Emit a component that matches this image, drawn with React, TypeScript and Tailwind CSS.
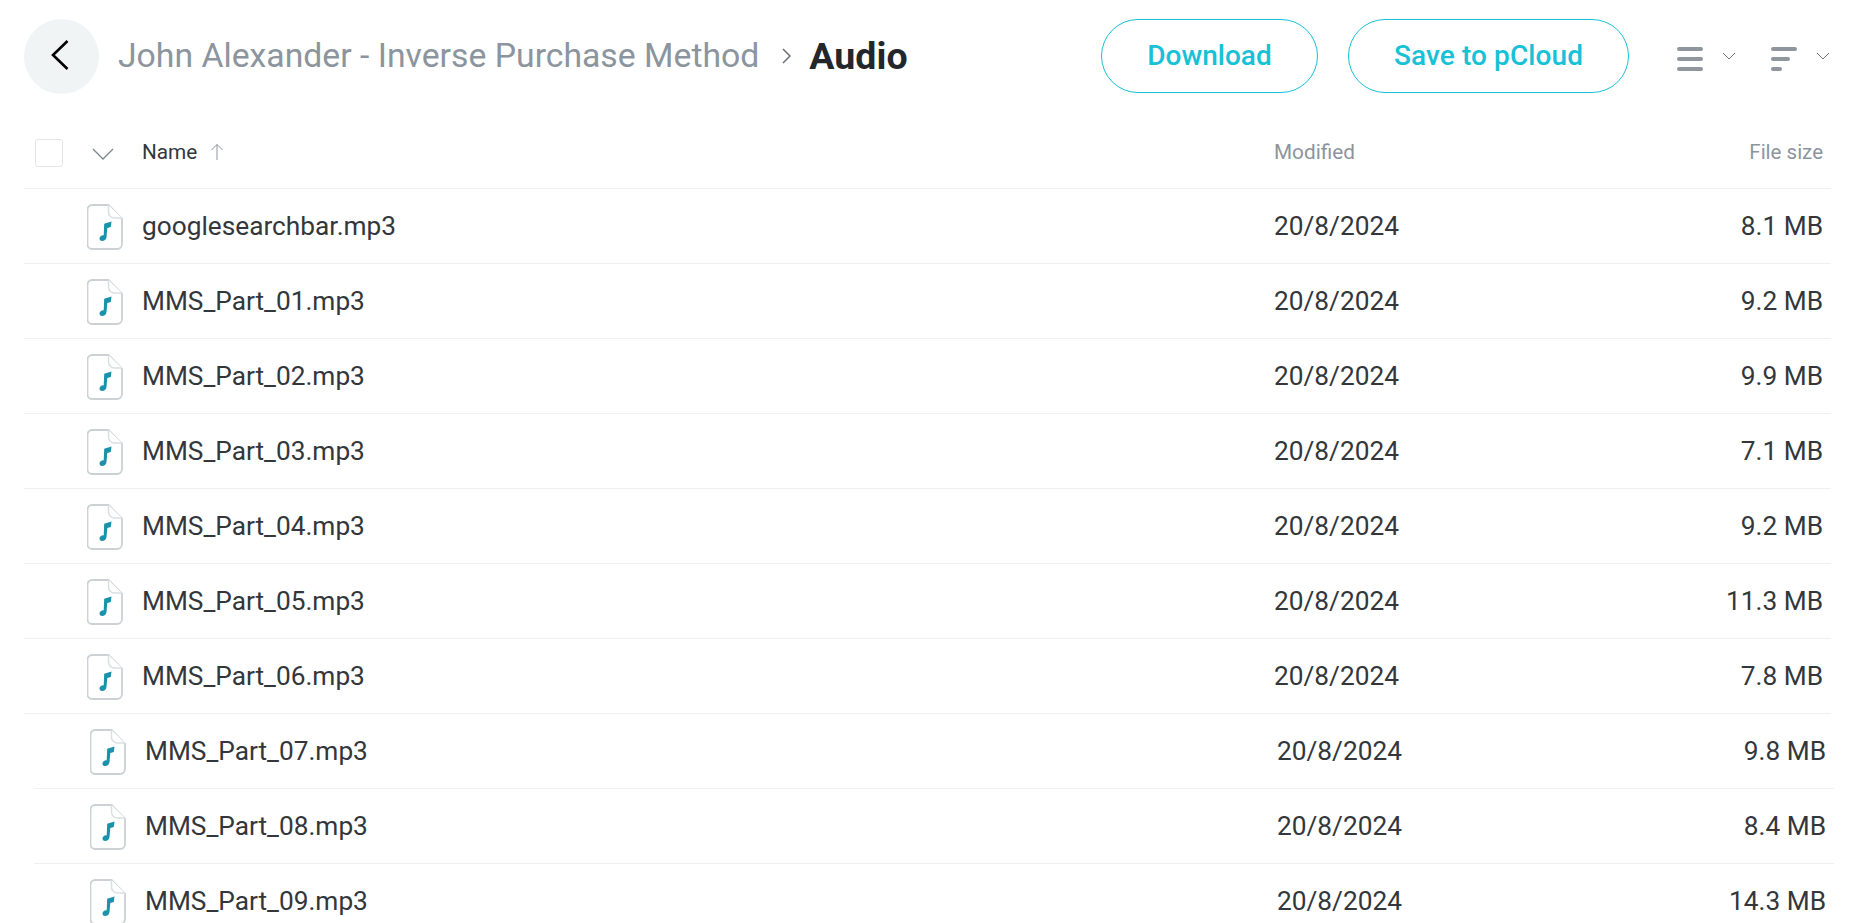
type FileRow = { name: string; size: string }

const topRows: FileRow[] = [
  { name: "googlesearchbar.mp3", size: "8.1 MB" },
  { name: "MMS_Part_01.mp3", size: "9.2 MB" },
  { name: "MMS_Part_02.mp3", size: "9.9 MB" },
  { name: "MMS_Part_03.mp3", size: "7.1 MB" },
  { name: "MMS_Part_04.mp3", size: "9.2 MB" },
  { name: "MMS_Part_05.mp3", size: "11.3 MB" },
  { name: "MMS_Part_06.mp3", size: "7.8 MB" },
]

const bottomRows: FileRow[] = [
  { name: "MMS_Part_07.mp3", size: "9.8 MB" },
  { name: "MMS_Part_08.mp3", size: "8.4 MB" },
  { name: "MMS_Part_09.mp3", size: "14.3 MB" },
]

function AudioFileIcon() {
  return (
    <svg width="36" height="46" viewBox="0 0 36 46" fill="none" className="mt-[1px] shrink-0">
      <path
        d="M5 1h16.500L35 14.500V40a5 5 0 0 1-5 5H5a4.500 4.500 0 0 1-4.500-4.500V5.500A4.500 4.500 0 0 1 5 1Z"
        fill="#fff"
        stroke="#cdd1d5"
        strokeWidth="1.800"
      />
      <path d="M21.500 1v7a6 6 0 0 0 6 6H35" stroke="#dcdfe2" strokeWidth="1.500" fill="#fff" />
      <path
        d="M17.200 19.800 24.500 17.500 23.800 23 20.300 24 19.500 33C19.200 35.500 17.300 37 15.200 37 13.400 37 12.300 35.900 12.500 34.300 12.700 32.700 14.400 31.300 16 31.300 16.300 31.300 16.500 31.300 16.700 31.400Z"
        fill="#1b92ab"
      />
    </svg>
  )
}

function SmallChevron() {
  return (
    <svg width="14" height="8" viewBox="0 0 14 8" fill="none">
      <path d="M1 1l6 6 6-6" stroke="#6b7178" strokeWidth="1" />
    </svg>
  )
}

function Row({ row, shifted }: { row: FileRow; shifted?: boolean }) {
  return (
    <div
      className={`flex h-[75px] items-center border-b border-[#eef0f1] pr-[8px] ${
        shifted ? "pl-[56px]" : "pl-[63px]"
      }`}
    >
      <AudioFileIcon />
      <div className="ml-[19px] mt-[1px] flex-1 truncate text-[26.250px] text-[#33373b]">{row.name}</div>
      <div className="mt-[1px] w-[349px] text-[26.250px] text-[#33373b]">20/8/2024</div>
      <div className="mt-[1px] w-[200px] text-right text-[26.250px] text-[#33373b]">{row.size}</div>
    </div>
  )
}

export default function App() {
  return (
    <div className="h-[923px] overflow-hidden bg-white font-['Roboto',sans-serif]">
      <header className="flex h-[113px] items-start pl-[24px] pt-[19px]">
        <button className="flex h-[75px] w-[75px] items-center justify-center rounded-full bg-[#f1f4f5]">
          <svg width="18" height="30" viewBox="0 0 18 30" fill="none" className="-ml-[4px] -mt-[3px]">
            <path d="M16.500 1 2 15l14.500 14" stroke="#000" strokeWidth="2.600" />
          </svg>
        </button>
        <div className="ml-[19px] flex h-[75px] items-center pb-[1px] leading-none">
          <span className="text-[33.750px] text-[#8c959d]">John Alexander - Inverse Purchase Method</span>
          <svg width="12" height="18" viewBox="0 0 12 18" fill="none" className="ml-[22px]">
            <path d="M2 2l7 7-7 7" stroke="#6b7178" strokeWidth="1.500" />
          </svg>
          <span className="ml-[16px] mt-[1px] text-[37.500px] font-bold text-[#23272b]">Audio</span>
        </div>
        <div className="ml-auto flex h-[75px] items-center pr-[33px]">
          <button className="mb-[2px] h-[74px] w-[217px] rounded-full border border-[#17c1d6] text-[28px] font-medium text-[#17c1d6]">
            Download
          </button>
          <button className="mb-[2px] ml-[30px] h-[74px] w-[281px] rounded-full border border-[#17c1d6] text-[28px] font-medium tracking-[0.1px] text-[#17c1d6]">
            Save to pCloud
          </button>
          <div className="ml-[48px] mt-[4px] flex w-[26px] flex-col gap-[6px]">
            <span className="h-[4px] w-[26px] rounded-full bg-[#8f969e]" />
            <span className="h-[4px] w-[26px] rounded-full bg-[#8f969e]" />
            <span className="h-[4px] w-[26px] rounded-full bg-[#8f969e]" />
          </div>
          <span className="mb-[2px] ml-[19px] flex"><SmallChevron /></span>
          <div className="ml-[35px] mt-[4px] flex w-[26px] flex-col gap-[6px]">
            <span className="h-[4px] w-[26px] rounded-full bg-[#8f969e]" />
            <span className="h-[4px] w-[19px] rounded-full bg-[#8f969e]" />
            <span className="h-[4px] w-[11px] rounded-full bg-[#8f969e]" />
          </div>
          <span className="mb-[2px] ml-[19px] flex"><SmallChevron /></span>
        </div>
      </header>

      <div className="ml-[24px] w-[1807px]">
        <div className="flex h-[76px] items-center border-b border-[#eef0f1] pr-[8px] pt-[4px]">
          <span className="ml-[11px] h-[28px] w-[28px] rounded-[3px] border border-[#e3e6e8]" />
          <svg width="22" height="12" viewBox="0 0 22 12" fill="none" className="ml-[29px] mt-[3px]">
            <path d="M1 1l10 10L21 1" stroke="#7d868e" strokeWidth="1.300" />
          </svg>
          <span className="ml-[28px] text-[20.750px] text-[#33373b]">Name</span>
          <svg width="14" height="18" viewBox="0 0 14 18" fill="none" className="ml-[13px] -mt-[1px]">
            <path d="M7 17V1.500M1.500 7 7 1.500 12.500 7" stroke="#8f969e" strokeWidth="1" />
          </svg>
          <span className="ml-auto w-[349px] text-[20.750px] text-[#8c959d]">Modified</span>
          <span className="w-[200px] text-right text-[20.500px] text-[#8c959d]">File size</span>
        </div>
        {topRows.map((row) => (
          <Row key={row.name} row={row} />
        ))}
      </div>
      <div className="ml-[34px] w-[1800px]">
        {bottomRows.map((row) => (
          <Row key={row.name} row={row} shifted />
        ))}
      </div>
    </div>
  )
}
